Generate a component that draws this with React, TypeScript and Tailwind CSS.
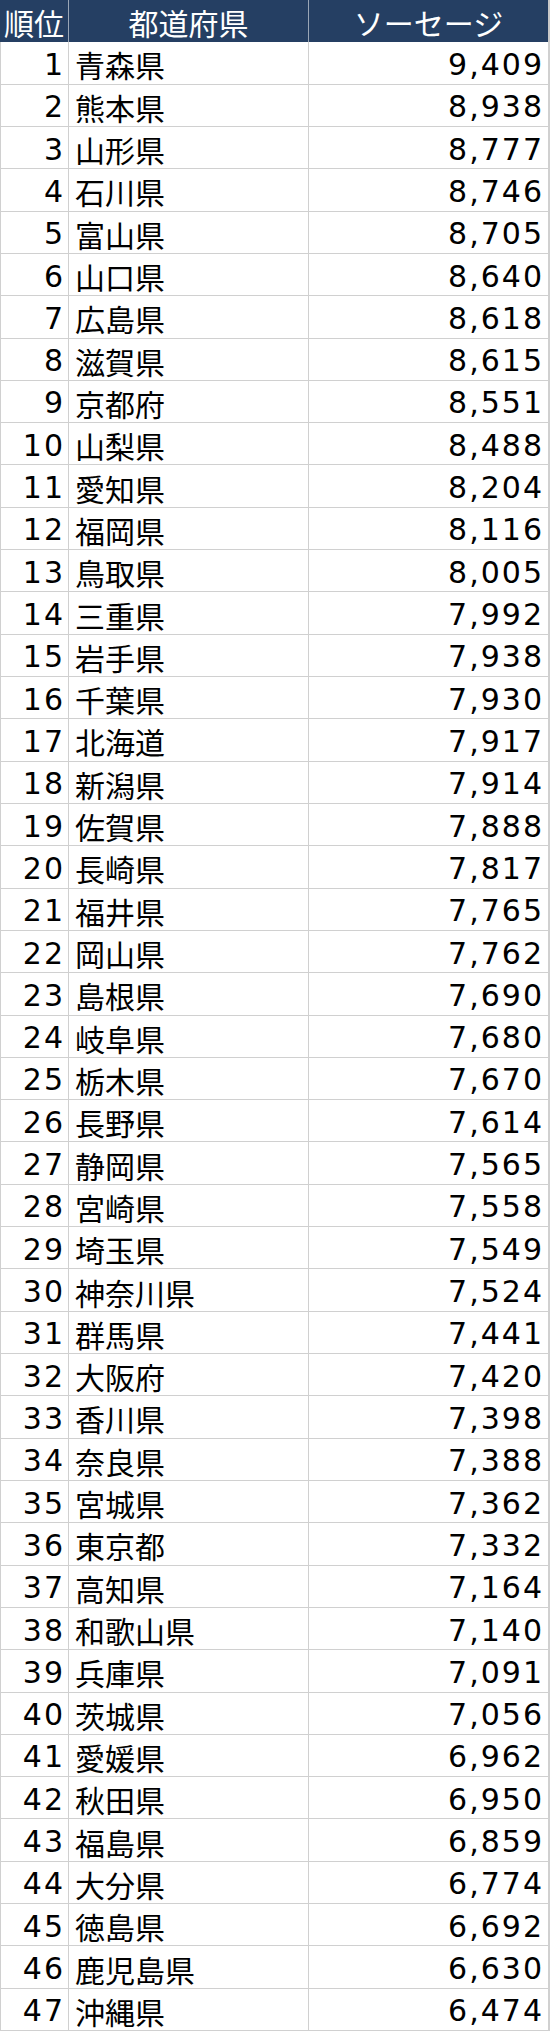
import React from "react";

const rows: [string, string][] = [
  ["青森県", "9,409"],
  ["熊本県", "8,938"],
  ["山形県", "8,777"],
  ["石川県", "8,746"],
  ["富山県", "8,705"],
  ["山口県", "8,640"],
  ["広島県", "8,618"],
  ["滋賀県", "8,615"],
  ["京都府", "8,551"],
  ["山梨県", "8,488"],
  ["愛知県", "8,204"],
  ["福岡県", "8,116"],
  ["鳥取県", "8,005"],
  ["三重県", "7,992"],
  ["岩手県", "7,938"],
  ["千葉県", "7,930"],
  ["北海道", "7,917"],
  ["新潟県", "7,914"],
  ["佐賀県", "7,888"],
  ["長崎県", "7,817"],
  ["福井県", "7,765"],
  ["岡山県", "7,762"],
  ["島根県", "7,690"],
  ["岐阜県", "7,680"],
  ["栃木県", "7,670"],
  ["長野県", "7,614"],
  ["静岡県", "7,565"],
  ["宮崎県", "7,558"],
  ["埼玉県", "7,549"],
  ["神奈川県", "7,524"],
  ["群馬県", "7,441"],
  ["大阪府", "7,420"],
  ["香川県", "7,398"],
  ["奈良県", "7,388"],
  ["宮城県", "7,362"],
  ["東京都", "7,332"],
  ["高知県", "7,164"],
  ["和歌山県", "7,140"],
  ["兵庫県", "7,091"],
  ["茨城県", "7,056"],
  ["愛媛県", "6,962"],
  ["秋田県", "6,950"],
  ["福島県", "6,859"],
  ["大分県", "6,774"],
  ["徳島県", "6,692"],
  ["鹿児島県", "6,630"],
  ["沖縄県", "6,474"],
];

const numFont = "[font-family:'DejaVu_Sans','Noto_Sans_CJK_JP',sans-serif] tracking-[2px]";

export default function App() {
  return (
    <div className="w-[550px] h-[2031px] bg-white text-[30px] leading-[36px] text-black [font-family:'Noto_Sans_CJK_JP',sans-serif] flex flex-col overflow-hidden">
      <div className="grid grid-cols-[69px_240px_1fr] h-[42.3125px] shrink-0 bg-[#253f63] text-white">
        <div className="flex items-center justify-center border-r border-[#9aa6b6] pt-[1px] whitespace-nowrap">順位</div>
        <div className="flex items-center justify-center border-r border-[#9aa6b6] pt-[1px] whitespace-nowrap">都道府県</div>
        <div className="flex items-center justify-center border-r-2 border-[#c8c8c8] pt-[1px] whitespace-nowrap">ソーセージ</div>
      </div>
      {rows.map(([pref, val], i) => (
        <div key={pref} className="grid grid-cols-[69px_240px_1fr] h-[42.3125px] shrink-0 border-b border-[#d0d0d0]">
          <div className={`flex items-center justify-end border-l border-r border-[#d0d0d0] pr-[3px] pt-[4px] whitespace-nowrap ${numFont}`}>
            {i + 1}
          </div>
          <div className="flex items-center justify-start border-r border-[#d0d0d0] pl-[6px] pt-[3px] whitespace-nowrap">{pref}</div>
          <div className={`flex items-center justify-end border-r-2 border-[#d0d0d0] pr-[4px] pt-[4px] whitespace-nowrap ${numFont}`}>{val}</div>
        </div>
      ))}
    </div>
  );
}
